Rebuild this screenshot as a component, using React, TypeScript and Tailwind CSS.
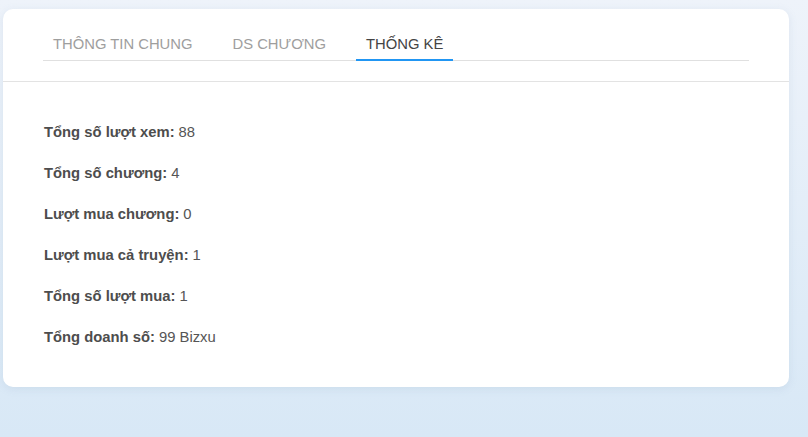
const tabs = ['THÔNG TIN CHUNG', 'DS CHƯƠNG', 'THỐNG KÊ'];

const stats = [
  { label: 'Tổng số lượt xem:', value: '88' },
  { label: 'Tổng số chương:', value: '4' },
  { label: 'Lượt mua chương:', value: '0' },
  { label: 'Lượt mua cả truyện:', value: '1' },
  { label: 'Tổng số lượt mua:', value: '1' },
  { label: 'Tổng doanh số:', value: '99 Bizxu' },
];

export default function App() {
  return (
    <div className="min-h-[437px] bg-gradient-to-b from-[#eef3fa] to-[#d8e8f6] pt-[9px] pl-[3px] font-['Liberation_Sans',Arial,sans-serif]">
      <div className="w-[786px] rounded-[10px] bg-white shadow-[0_2px_8px_rgba(120,150,180,0.15)]">
        <div className="border-b border-[#e3e3e3] px-[40px] pt-[23px] pb-[20px]">
          <div className="flex gap-[20px] border-b border-[#e0e0e0]">
            {tabs.map((t, i) => (
              <div
                key={t}
                className={
                  i === 2
                    ? '-mb-px border-b-2 border-[#2196f3] px-[10px] pb-[3px] text-[14.8px] leading-[24px] text-[#444]'
                    : 'px-[10px] pb-[4px] text-[14.8px] leading-[24px] text-[#9e9e9e]'
                }
              >
                {t}
              </div>
            ))}
          </div>
        </div>
        <div className="px-[41px] pt-[30px] pb-[29px]">
          {stats.map((s) => (
            <div key={s.label} className="flex h-[41px] items-center text-[14.8px] text-[#555]">
              <span className="font-bold text-[#4d4d4d]">{s.label}</span>
              <span className="ml-[4px]">{s.value}</span>
            </div>
          ))}
        </div>
      </div>
    </div>
  );
}
